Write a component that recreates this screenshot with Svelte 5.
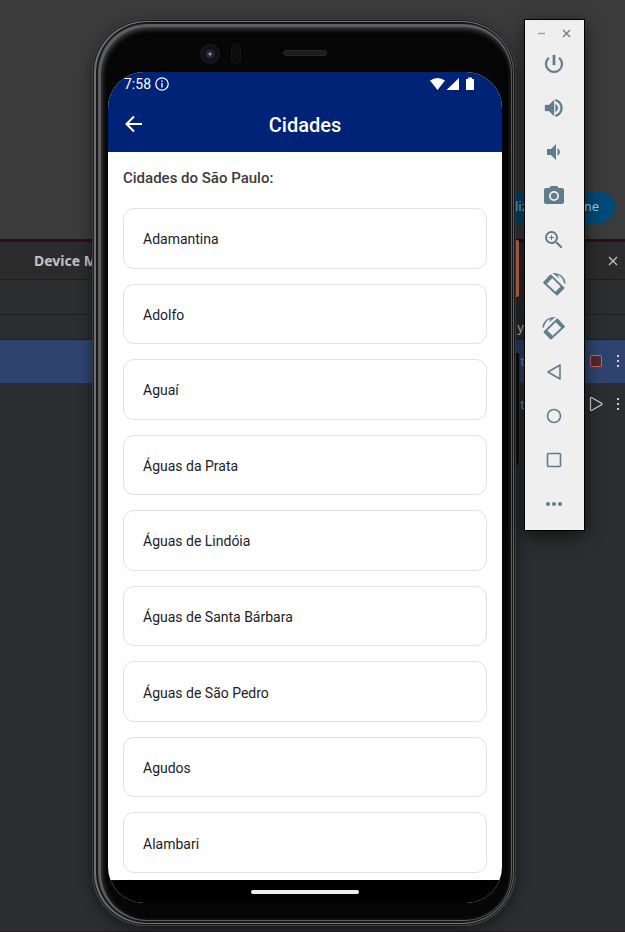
<script>
  const cities = ['Adamantina', 'Adolfo', 'Aguaí', 'Águas da Prata', 'Águas de Lindóia', 'Águas de Santa Bárbara', 'Águas de São Pedro', 'Agudos', 'Alambari'];
  const tools = ['Power', 'Volume up', 'Volume down', 'Screenshot', 'Zoom', 'Rotate left', 'Rotate right', 'Back', 'Home', 'Overview', 'More'];
</script>

{#snippet rotate()}
  <path d="M8.700 3.400L21.500 16L15 22.500L2 10.500z" fill="none" stroke="#607d8b" stroke-width="1.800" stroke-linejoin="round" />
  <path d="M3 11.500L9.700 4.400M20.500 15L14 21.500" stroke="#607d8b" stroke-width="3.200" />
  <path d="M10.500 1Q22 .5 23.800 11.500h-1.600Q20.500 4.500 15.500 2.800L17 6.500z" />
{/snippet}

<div class="desktop">
  <div class="browser">
    <button class="pill"><span>liz</span><span>me</span></button>
  </div>
  <section class="ide">
    <header class="ide-head">
      <h2>Device Manager</h2>
      <button class="icon" aria-label="Close panel"><svg width="10" height="10" viewBox="0 0 10 10"><path d="M1 1l8 8M9 1L1 9" stroke="#c4c5c8" stroke-width="1.2" /></svg></button>
    </header>
    <div class="bar"></div>
    <div class="bar cols"><span>y</span></div>
    <div class="row selected">
      <span class="link">t</span>
      <button class="icon" aria-label="Stop"><svg width="14" height="14" viewBox="0 0 14 14"><rect x="1.5" y="1.5" width="11" height="11" rx="1.5" fill="#4a2b31" stroke="#db5c5c" /></svg></button>
      <button class="icon" aria-label="Device menu"><svg width="4" height="14" viewBox="0 0 4 14" fill="#ced0d6"><path d="M1 1h2v2H1zM1 6h2v2H1zM1 11h2v2H1z" /></svg></button>
    </div>
    <div class="row">
      <span class="link">t</span>
      <button class="icon" aria-label="Start"><svg width="14" height="14" viewBox="0 0 14 14"><path d="M1.500 1v12q0 1 1 .5l10-5.700q1-.8 0-1.600L2.500.5q-1-.4-1 .5z" fill="none" stroke="#ced0d6" stroke-width="1.200" /></svg></button>
      <button class="icon" aria-label="Device menu"><svg width="4" height="14" viewBox="0 0 4 14" fill="#ced0d6"><path d="M1 1h2v2H1zM1 6h2v2H1zM1 11h2v2H1z" /></svg></button>
    </div>
  </section>

  <div class="accent"></div>
  <div class="rocker"></div>

  <div class="phone">
    <div class="bezel">
      <i class="lens"></i><i class="sensor"></i><i class="speaker"></i>
    </div>
    <div class="screen">
      <div class="status">
        <span>7:58</span>
        <svg width="14" height="14" viewBox="0 0 14 14"><circle cx="7" cy="7" r="6.200" fill="none" stroke="#fff" stroke-width="1.300" /><path d="M6.300 3.500h1.400v1.400H6.300zM6.300 6h1.400v4.500H6.300z" fill="#fff" /></svg>
        <svg class="signals" width="46" height="14" viewBox="0 0 46 14" fill="#fff"><path d="M0 3.500Q7.500-1.500 15 3.500L7.500 13zM29 1v12H16.500zM36 2h2V.5h4V2h2v11h-8V2z" /></svg>
      </div>
      <header class="app-head">
        <button class="icon back" aria-label="Voltar"><svg width="18" height="18" viewBox="0 0 18 18"><path d="M17 9H2M9 1.500L1.500 9L9 16.500" fill="none" stroke="#fff" stroke-width="2" /></svg></button>
        <h1>Cidades</h1>
      </header>
      <main>
        <h2>Cidades do São Paulo:</h2>
        <div class="list">
          {#each cities as city}
            <button class="card">{city}</button>
          {/each}
        </div>
      </main>
      <div class="nav"><i></i></div>
    </div>
  </div>

  <aside class="tools">
    <div class="win">
      <button class="icon" aria-label="Minimize"><svg width="9" height="9" viewBox="0 0 9 9"><path d="M1 4.500h7" stroke="#8fa3ab" stroke-width="1.500" /></svg></button>
      <button class="icon" aria-label="Close"><svg width="9" height="9" viewBox="0 0 9 9"><path d="M1 1l7 7M8 1L1 8" stroke="#6f8790" stroke-width="1.500" /></svg></button>
    </div>
    {#each tools as tool}
      <button class="icon tool" aria-label={tool}>
        <svg width="24" height="24" viewBox="0 0 24 24" fill="#607d8b">
          {#if tool === 'Power'}
            <path d="M13.200 3h-2.400v10h2.400zM17.830 5.170l-1.420 1.420A6.920 6.920 0 0 1 19 12a7 7 0 1 1-11.420-5.420L6.170 5.170A8.932 8.932 0 0 0 3 12a9 9 0 0 0 18 0c0-2.740-1.230-5.180-3.170-6.830z" stroke="#607d8b" stroke-width=".3" />
          {:else if tool === 'Volume up'}
            <path d="M3 9v6h4l5 5V4L7 9zM13.500 8v8a4.500 4.500 0 0 0 0-8zM13.500 3.200v2.100a7 7 0 0 1 0 13.400v2.100a9 9 0 0 0 0-17.600z" stroke="#607d8b" stroke-width=".3" />
          {:else if tool === 'Volume down'}
            <path d="M5 9v6h4l5 5V4L9 9zM15.500 8v8a4.500 4.500 0 0 0 0-8z" />
          {:else if tool === 'Screenshot'}
            <circle cx="12" cy="12" r="3.200" /><path d="M9 2L7.170 4H4c-1.100 0-2 .9-2 2v12c0 1.100.9 2 2 2h16c1.100 0 2-.9 2-2V6c0-1.100-.9-2-2-2h-3.170L15 2zm3 15a5 5 0 1 1 0-10 5 5 0 0 1 0 10z" />
          {:else if tool === 'Zoom'}
            <path d="M15.500 14h-.79l-.28-.27A6.471 6.471 0 0 0 16 9.500 6.500 6.500 0 1 0 9.500 16c1.610 0 3.090-.59 4.230-1.570l.27.28v.79l5 4.990L20.490 19zm-6 0a4.500 4.500 0 1 1 0-9 4.500 4.500 0 0 1 0 9zM12 10h-2v2H9v-2H7V9h2V7h1v2h2z" />
          {:else if tool === 'Rotate left'}
            {@render rotate()}
          {:else if tool === 'Rotate right'}
            <g transform="matrix(-1 0 0 1 24 0)">{@render rotate()}</g>
          {:else if tool === 'Back'}
            <path d="M18 5v14L6 12z" fill="none" stroke="#607d8b" stroke-width="1.600" stroke-linejoin="round" />
          {:else if tool === 'Home'}
            <circle cx="12" cy="12" r="6.500" fill="none" stroke="#607d8b" stroke-width="1.600" />
          {:else if tool === 'Overview'}
            <rect x="5.500" y="5.500" width="13" height="13" rx="1" fill="none" stroke="#607d8b" stroke-width="1.600" />
          {:else}
            <circle cx="6" cy="12" r="2" /><circle cx="12" cy="12" r="2" /><circle cx="18" cy="12" r="2" />
          {/if}
        </svg>
      </button>
    {/each}
  </aside>
</div>

<style>
  .desktop, .desktop * { box-sizing: border-box; }
  .desktop { position: relative; min-height: 100vh; overflow: hidden; display: flex; flex-direction: column; background: #2b2d30; font-family: "Noto Sans", sans-serif; color: #ced0d6; }
  button { border: 0; padding: 0; background: none; font: inherit; color: inherit; }
  h1, h2 { margin: 0; }
  .icon { display: flex; align-items: center; justify-content: center; }
  .browser { height: 239px; padding: 191px 10px 0; display: flex; justify-content: flex-end; align-items: flex-start; background: #3b3b3b; }
  .pill { width: 144px; height: 32px; padding: 0 16px 2px 44px; border-radius: 16px; display: flex; justify-content: space-between; align-items: center; background: #004a77; color: #a8c7dc; font-size: 13px; }
  .ide { flex: 1; border-top: 3px solid #300a1e; border-bottom: 1px solid #2a1a20; }
  .ide-head { height: 38px; padding: 0 7px 0 34px; display: flex; align-items: center; justify-content: space-between; background: #2b2b2b; border-bottom: 1px solid #1e1f22; border-radius: 0 8px 0 0; }
  .ide-head h2 { font-size: 14px; font-weight: 700; color: #c0c1c4; }
  .bar { height: 35px; border-bottom: 1px solid #1e1f22; }
  .cols { height: 25px; padding-right: 101px; display: flex; align-items: center; justify-content: flex-end; font-size: 13px; }
  .row { height: 43px; padding: 0 5px 2px 0; display: flex; align-items: center; justify-content: flex-end; gap: 13px; }
  .row .link { margin-right: 51px; color: #5a9bd0; font-size: 13px; }
  .selected { background: #2e436e; }
  .accent { position: absolute; left: 515px; top: 240px; width: 4px; height: 57px; background: #e07a62; border-radius: 0 2px 2px 0; }
  .rocker { position: absolute; left: 514px; top: 353px; width: 6px; height: 112px; border-radius: 2px; background: #111; border-right: 1px solid #333; }

  .phone { position: absolute; left: 92px; right: 109px; top: 19px; bottom: 6px; padding: 0 14px 23px 16px; display: flex; flex-direction: column; border-radius: 54px; background: #060607;
    box-shadow: inset 0 0 0 1px #3c3d3f, inset 0 0 0 2px #1c1c1d, inset 1px 0 0 3px #707174, inset 0 0 0 3px #606164, inset 1px 0 0 5px #18181a, inset 2px 1px 0 7px #5c5d5f, inset 3px 3px 5px 7px #4a4a4b, 0 4px 14px #0007; }
  .bezel { position: relative; height: 53px; flex: none; }
  .lens { position: absolute; left: 92px; top: 25px; width: 20px; height: 20px; border-radius: 50%; background: radial-gradient(circle, #8a90a8 0 1px, #20263c 2px 4px, #111 5px 8px, #19191b 9px); }
  .sensor { position: absolute; left: 123px; top: 24px; width: 10px; height: 21px; border-radius: 5px; background: #0d0d0e; border: 1px solid #151516; }
  .speaker { position: absolute; left: 175px; top: 31px; width: 44px; height: 6px; border-radius: 3px; background: #1d1d1e; border: 1px solid #262627; }
  .screen { flex: 1; min-height: 0; display: flex; flex-direction: column; overflow: hidden; border-radius: 36px; background: #fff; font-family: Roboto, sans-serif; color: #1c1b1f; }
  .status { height: 24px; padding: 0 26px 0 16px; display: flex; align-items: center; gap: 4px; background: #002277; color: #fff; font-size: 14px; }
  .signals { margin-left: auto; }
  .app-head { height: 56px; padding: 0 16px; display: grid; grid-template-columns: 20px 1fr 20px; align-items: center; background: #002277; color: #fff; }
  .app-head h1 { padding-top: 2px; text-align: center; font-size: 20px; font-weight: 500; }
  main { flex: 1; min-height: 0; padding: 16px 15px 7px; display: flex; flex-direction: column; gap: 20px; }
  main h2 { font-size: 15px; line-height: 20px; font-weight: 500; color: #3c3c3c; }
  .list { flex: 1; display: grid; grid-auto-rows: 1fr; gap: 15px; }
  .card { padding: 2px 19px 0; border: 1px solid #e2e2e2; border-radius: 11px; text-align: left; font-size: 14px; }
  .nav { height: 23px; display: flex; justify-content: center; align-items: center; background: #000; }
  .nav i { width: 108px; height: 4px; border-radius: 2px; background: #eee; }

  .tools { position: absolute; left: 524px; top: 19px; width: 61px; padding: 4px 1px 4px 0; display: flex; flex-direction: column; align-items: center; border: 1px solid #000; background: #efefef; box-shadow: 0 5px 16px #0009; }
  .win { height: 18px; display: flex; gap: 16px; align-items: center; }
  .tool { width: 44px; height: 44px; }
</style>
